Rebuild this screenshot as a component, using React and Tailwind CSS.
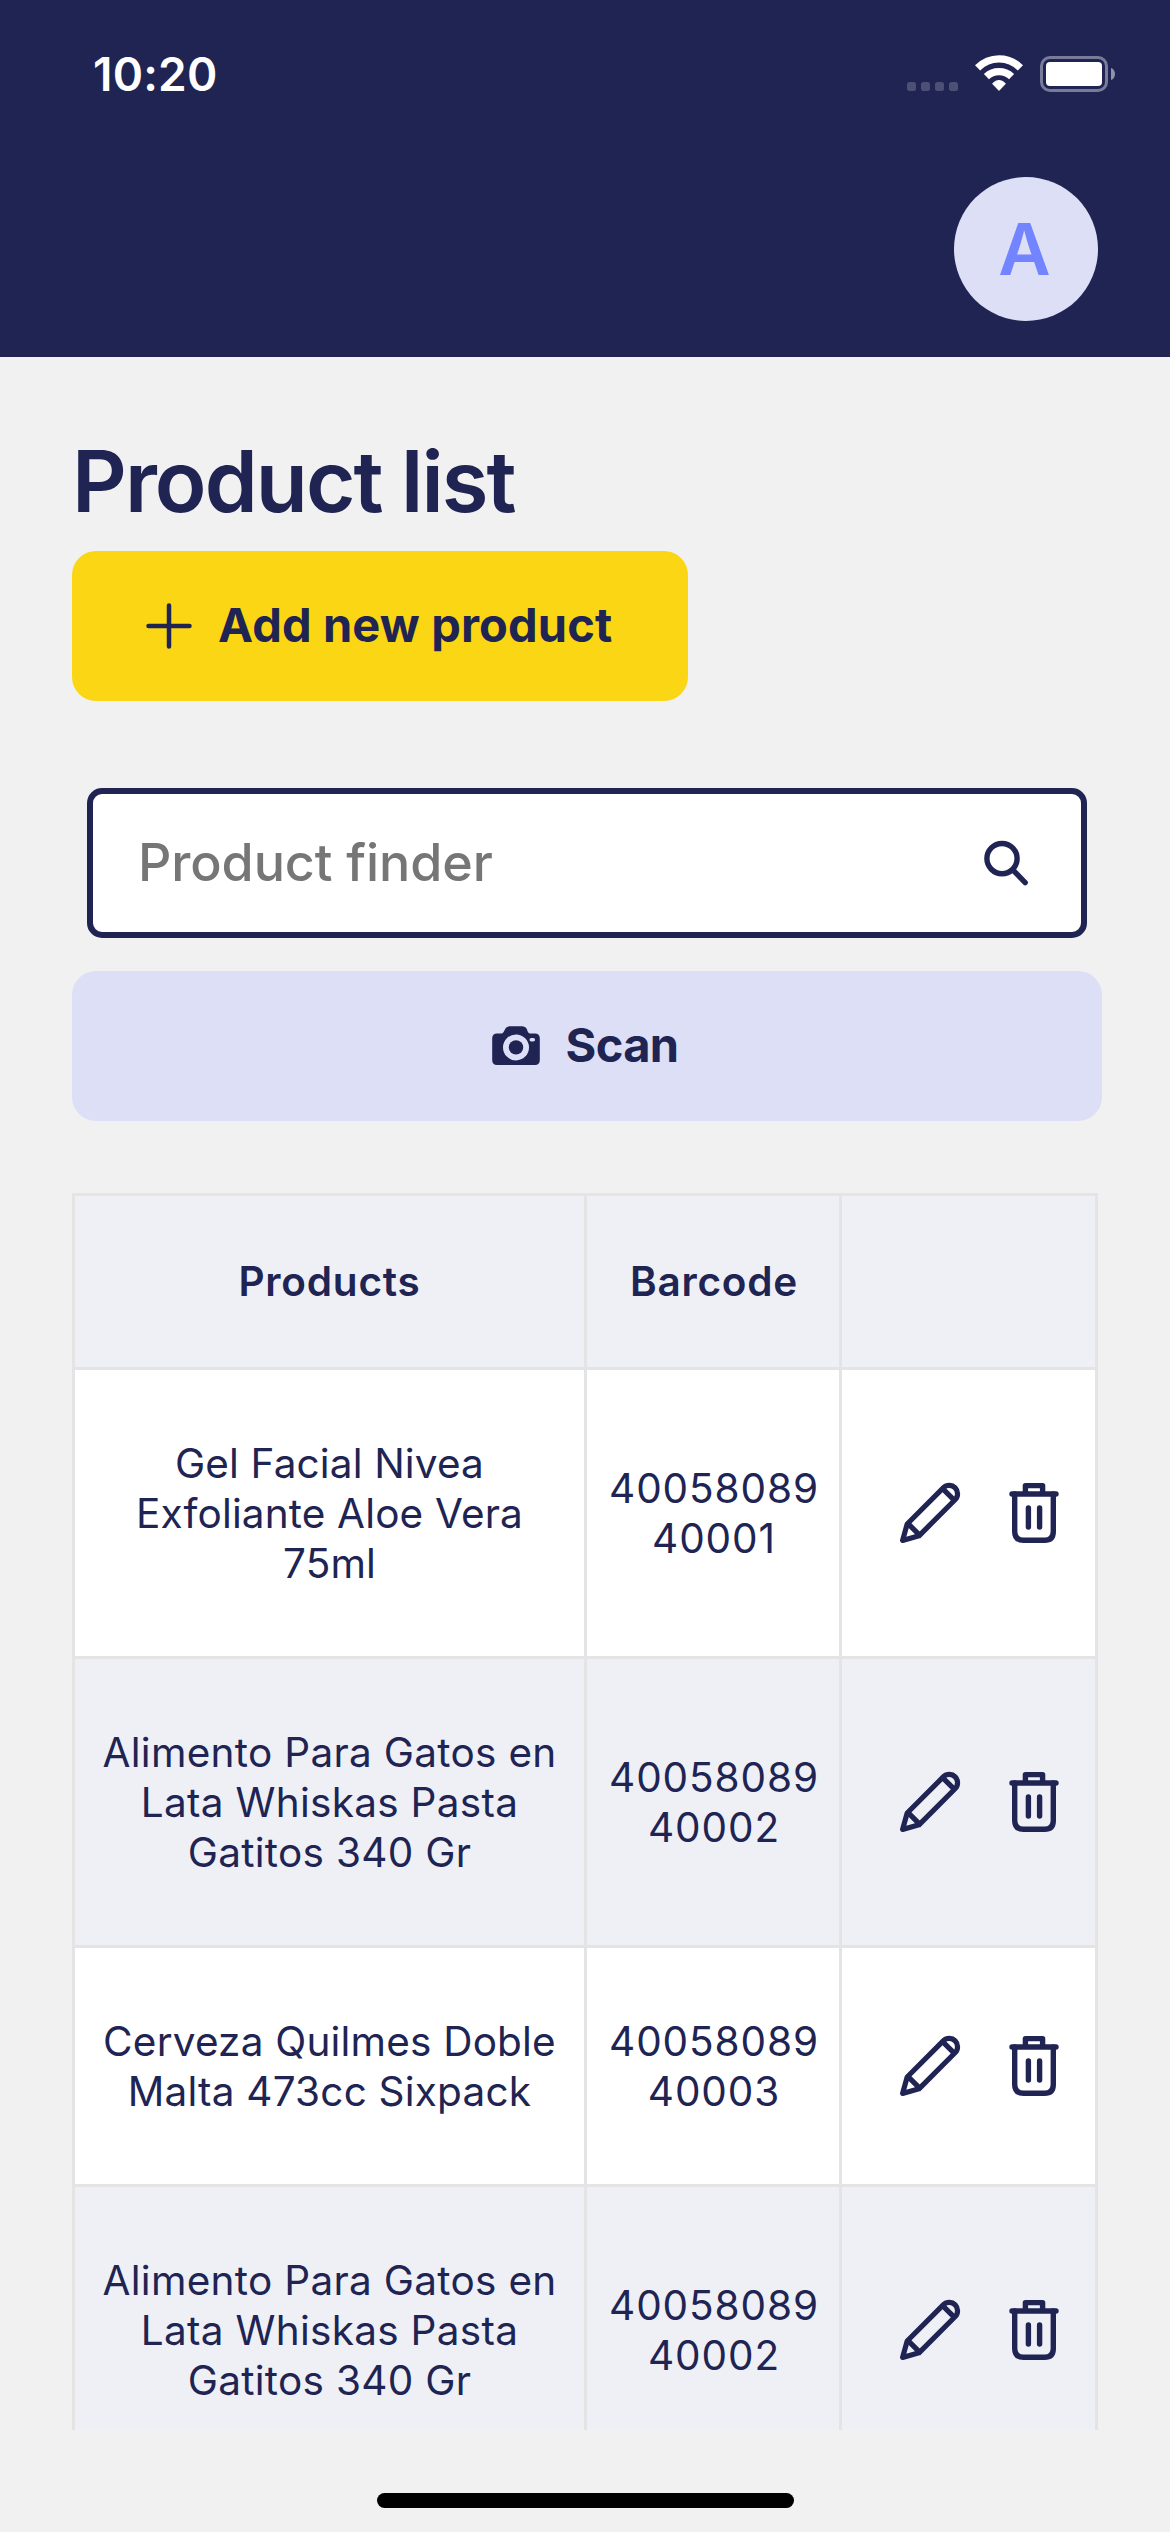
const NAVY = "#202453";

const products = [
  { name: ["Gel Facial Nivea", "Exfoliante Aloe Vera", "75ml"], spacing: "tracking-[0.15px]", code: ["40058089", "40001"] },
  { name: ["Alimento Para Gatos en", "Lata Whiskas Pasta", "Gatitos 340 Gr"], spacing: "tracking-[0.3px]", code: ["40058089", "40002"] },
  { name: ["Cerveza Quilmes Doble", "Malta 473cc Sixpack"], spacing: "tracking-[0.2px]", code: ["40058089", "40003"] },
  { name: ["Alimento Para Gatos en", "Lata Whiskas Pasta", "Gatitos 340 Gr"], spacing: "tracking-[0.3px]", code: ["40058089", "40002"] },
];

function WifiIcon() {
  return (
    <svg className="ml-[59px] h-[36px] w-[48px] shrink-0" viewBox="0 0 48 36" fill="none" stroke="white" strokeWidth="7.4">
      <path d="M2.6 12.9C14.8 0.9 33.2 0.9 45.4 12.9" />
      <path d="M11.4 21.6C18.5 15 29.5 15 36.6 21.6" />
      <path d="M17.6 28.8C21.3 24.4 26.7 24.4 30.4 28.8L24 35.4Z" fill="white" stroke="white" strokeWidth="1" strokeLinejoin="round" />
    </svg>
  );
}

function BatteryIcon() {
  return (
    <svg className="ml-[17px] h-[36px] w-[76px] shrink-0" viewBox="0 0 76 36" fill="none">
      <rect x="1.5" y="1.5" width="65" height="33" rx="8.5" stroke="#797c98" strokeWidth="3" />
      <rect x="6" y="6" width="56" height="24" rx="4" fill="white" />
      <path d="M71 12C73.5 12.8 75 15 75 18S73.5 23.2 71 24Z" fill="#9092a9" />
    </svg>
  );
}

function StatusBar() {
  return (
    <div className="flex h-[147px] items-start">
      <div className="mt-[46px] ml-[93px] h-[56px] w-[130px] text-[46px] leading-[56px] font-semibold tracking-[0.22px] whitespace-nowrap text-white">10:20</div>
      <div className="mt-[55px] ml-[684px] flex h-[37px] items-start">
        <div className="mt-[27px] flex gap-[5px]">
          {[0, 1, 2, 3].map((i) => (
            <div key={i} className="size-[9px] rounded-[2.5px] bg-[#4d5075]" />
          ))}
        </div>
        <div className="-ml-[42px] flex">
          <WifiIcon />
          <div className="mt-px flex">
            <BatteryIcon />
          </div>
        </div>
      </div>
    </div>
  );
}

function PlusIcon() {
  return (
    <svg className="size-[46px] shrink-0" viewBox="0 0 46 46" fill="none" stroke={NAVY} strokeWidth="4.5" strokeLinecap="round">
      <path d="M23 2.5V43.5M2.5 23H43.5" />
    </svg>
  );
}

function SearchIcon() {
  return (
    <svg className="h-[46px] w-[45px] shrink-0" viewBox="0 0 45 46" fill="none" stroke={NAVY} strokeWidth="5.4" strokeLinecap="round">
      <circle cx="18" cy="18.6" r="15.1" />
      <path d="M29.5 30.6L41.2 42.6" />
    </svg>
  );
}

function CameraIcon() {
  return (
    <svg className="h-[40px] w-[48px] shrink-0" viewBox="0 0 48 40">
      <path
        fill={NAVY}
        fillRule="evenodd"
        d="M5 7.4H9.5C10.8 7.4 11.3 6.6 12 5.2L13.2 3C14.3 1 15.8 0.2 18 0.2H30C32.2 0.2 33.7 1 34.8 3L35.6 5.2C36.2 6.6 36.8 7.4 38 7.4H43C46 7.4 47.8 9.3 47.8 12.2V34.2C47.8 37.2 46 39 43 39H5C2 39 0.2 37.2 0.2 34.2V12.2C0.2 9.3 2 7.4 5 7.4ZM24 8.4A13 13 0 1 0 24 34.4A13 13 0 1 0 24 8.4ZM39.3 12A1.8 1.8 0 1 0 39.3 15.6H41.3A1.8 1.8 0 1 0 41.3 12Z"
      />
      <circle cx="24" cy="21.4" r="7.2" fill={NAVY} />
    </svg>
  );
}

function PencilIcon() {
  return (
    <svg className="h-[62px] w-[62px]" viewBox="0 0 62 62" fill="none" stroke={NAVY} strokeWidth="5.2" strokeLinejoin="round" strokeLinecap="round">
      <path d="M3.6 58.4L8.2 42L44.5 5.7C47.6 2.6 53.2 2.8 56.2 5.8C59.2 8.8 59.4 14.4 56.3 17.5L20 53.8Z" />
      <path d="M8.8 41.4L20.6 53.2M43.6 6.6L55.4 18.4" strokeLinecap="butt" />
    </svg>
  );
}

function TrashIcon() {
  return (
    <svg className="h-[62px] w-[50px]" viewBox="0 0 50 62" fill="none" stroke={NAVY} strokeWidth="5.4" strokeLinecap="round" strokeLinejoin="round">
      <path d="M3 12H47" />
      <path d="M16.4 11V3.6H33.6V11" strokeLinecap="butt" />
      <path d="M5.7 12V49.5Q5.7 58.3 14.5 58.3H35.5Q44.3 58.3 44.3 49.5V12" />
      <path d="M19.4 26V45M30.6 26V45" />
    </svg>
  );
}

function Lines({ lines }) {
  return lines.map((line, i) => <div key={i}>{line}</div>);
}

function ProductRow({ product, shaded }) {
  return (
    <div
      className={`grid shrink-0 grid-cols-[509px_252px_1fr] gap-x-[3px] border-b-[3px] border-[#e4e4e4] bg-[#e4e4e4] text-center text-[40.5px] leading-[50px] whitespace-nowrap ${product.name.length === 3 ? "h-[289px]" : "h-[239px]"}`}
    >
      <div className={`flex flex-col justify-center pt-[2px] ${product.spacing} ${shaded ? "bg-[#eff0f6]" : "bg-white"}`}>
        <Lines lines={product.name} />
      </div>
      <div className={`flex flex-col justify-center pt-[2px] pl-[2px] tracking-[0.9px] ${shaded ? "bg-[#eff0f6]" : "bg-white"}`}>
        <Lines lines={product.code} />
      </div>
      <div className={`flex items-center justify-end gap-[48px] pr-[36px] ${shaded ? "bg-[#eff0f6]" : "bg-white"}`}>
        <PencilIcon />
        <TrashIcon />
      </div>
    </div>
  );
}

export default function App() {
  return (
    <div className="flex h-[2532px] w-[1170px] flex-col overflow-hidden bg-[#f1f1f1] font-[Inter,sans-serif] text-[#202453]">
      <header className="h-[357px] shrink-0 bg-[#202453]">
        <StatusBar />
        <div className="mt-[30px] mr-[72px] ml-auto flex size-[144px] items-center justify-center rounded-full bg-[#dddff6] pr-[3px] text-[72px] leading-none font-semibold text-[#7284ff]">
          A
        </div>
      </header>

      <main className="flex h-[2073px] shrink-0 flex-col overflow-hidden px-[72px]">
        <h1 className="mt-[75px] h-[100px] text-[85px] leading-[100px] font-semibold tracking-[-1.92px] whitespace-nowrap">Product list</h1>

        <button className="mt-[19px] flex h-[150px] w-[616px] shrink-0 items-center rounded-[24px] bg-[#fad615] pl-[74px]">
          <PlusIcon />
          <span className="mb-[2px] ml-[26px] text-[47px] leading-[58px] font-bold tracking-[0.14px] whitespace-nowrap">Add new product</span>
        </button>

        <div className="mt-[87px] ml-[15px] flex h-[150px] w-[1000px] shrink-0 items-center rounded-[15px] border-[6px] border-[#202453] bg-white pr-[52px] pl-[45px]">
          <span className="flex-1 text-[52px] leading-[64px] font-medium tracking-[-0.09px] text-[#767676]">Product finder</span>
          <SearchIcon />
        </div>

        <button className="mt-[33px] flex h-[150px] w-[1030px] shrink-0 items-center justify-center rounded-[24px] bg-[#dddff6] pr-[3px]">
          <CameraIcon />
          <span className="mb-[2px] ml-[25px] text-[47px] leading-[58px] font-bold tracking-[-0.6px]">Scan</span>
        </button>

        <section className="mt-[72px] flex w-[1026px] shrink-0 flex-col border-x-[3px] border-t-[3px] border-[#e4e4e4]">
          <div className="grid h-[174px] shrink-0 grid-cols-[509px_252px_1fr] gap-x-[3px] border-b-[3px] border-[#e4e4e4] bg-[#e4e4e4] text-[40.5px] leading-[50px] font-semibold tracking-[0.8px]">
            <div className="flex items-center justify-center bg-[#eff0f6]">Products</div>
            <div className="flex items-center justify-center bg-[#eff0f6] pl-[2px]">Barcode</div>
            <div className="bg-[#eff0f6]" />
          </div>
          {products.map((product, i) => (
            <ProductRow key={i} product={product} shaded={i % 2 === 1} />
          ))}
        </section>
      </main>

      <div className="mt-[63px] ml-[377px] h-[15px] w-[417px] shrink-0 rounded-full bg-black" />
    </div>
  );
}
